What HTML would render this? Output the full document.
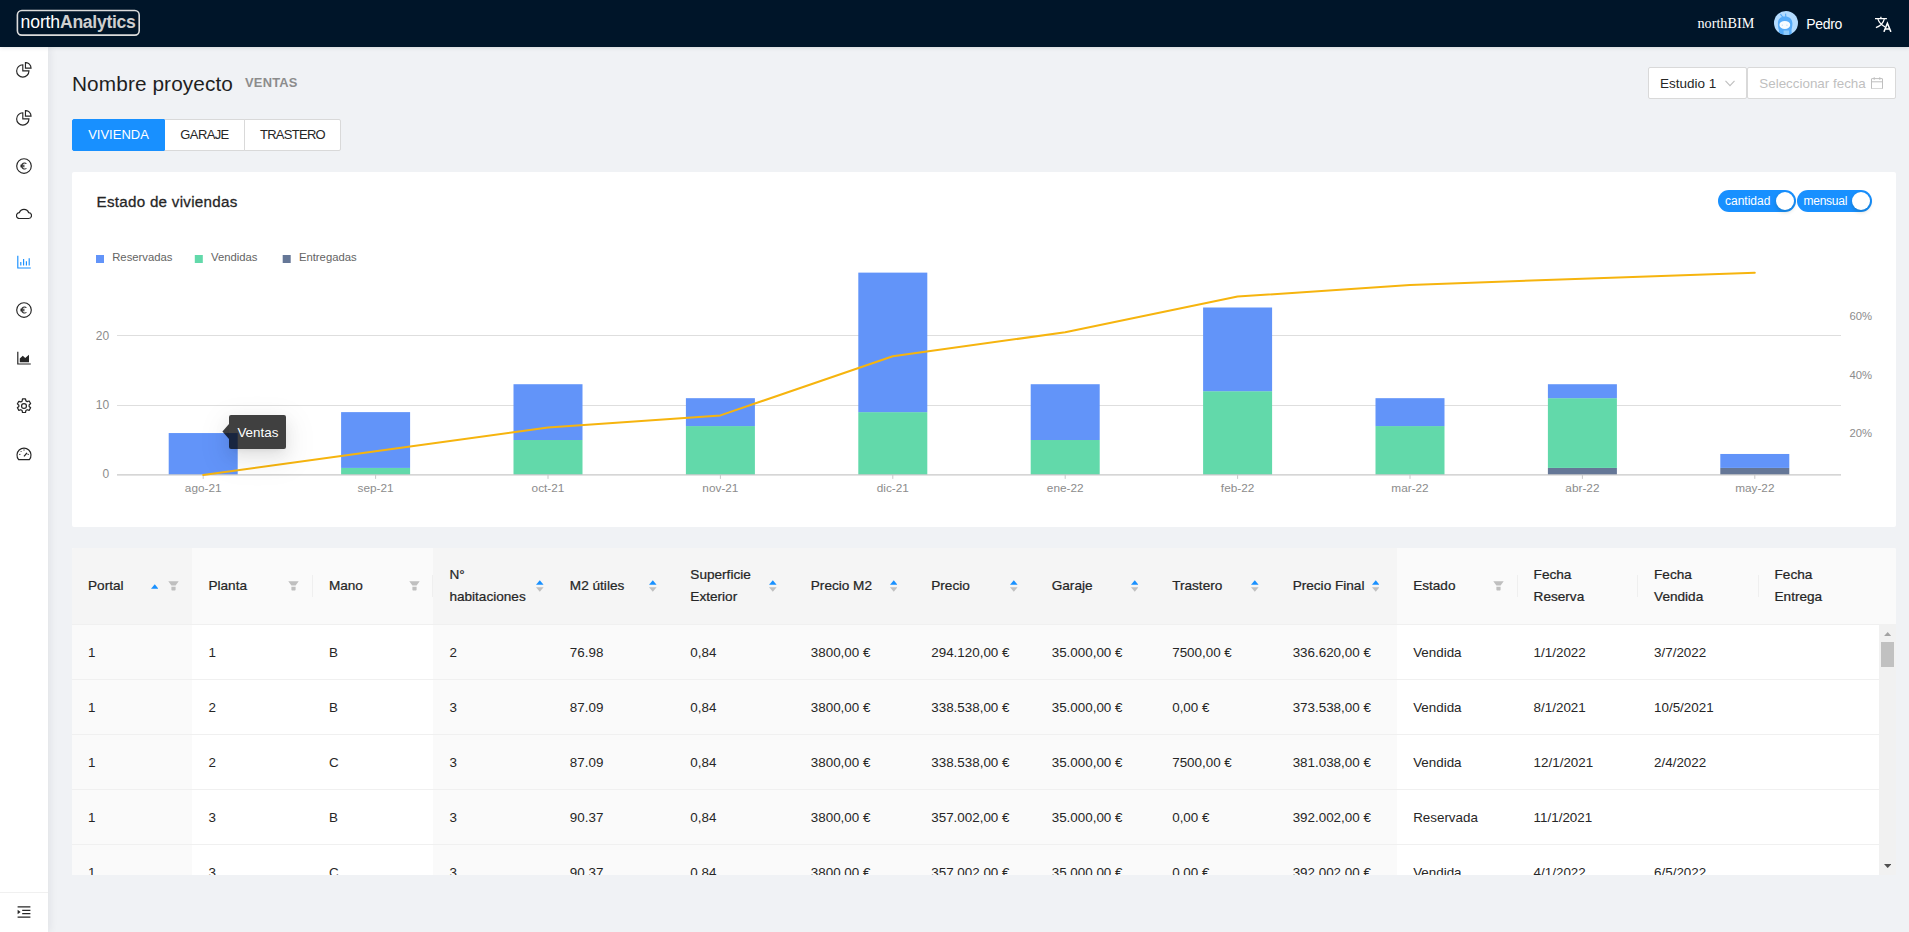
<!DOCTYPE html>
<html lang="es"><head><meta charset="utf-8"><title>northAnalytics</title>
<style>
*{box-sizing:border-box;margin:0;padding:0}
html,body{width:1909px;height:932px;overflow:hidden}
body{position:relative;background:#f0f2f5;font-family:"Liberation Sans",sans-serif;font-size:13.4px;color:#262626}
.abs{position:absolute}
#hdr{position:absolute;left:0;top:0;width:1909px;height:47px;background:#001529;box-shadow:0 1px 4px rgba(0,21,41,.12);z-index:5}
#logo{position:absolute;left:16px;top:9px;width:125px;height:28px;color:#fff;font-size:17.6px;line-height:27.2px;padding-left:4.6px;white-space:nowrap;letter-spacing:-.14px}
#logo svg{position:absolute;left:0;top:0}
#logo b{color:#cfcfcf;font-weight:bold;letter-spacing:-.3px}
#nb{position:absolute;left:1697.5px;top:14px;font-family:"Liberation Serif",serif;font-size:14.2px;line-height:18px;color:#fff}
#av{position:absolute;left:1774px;top:11px;width:24px;height:24px;border-radius:12px;overflow:hidden}
#un{position:absolute;left:1806.3px;top:14.6px;font-size:14px;line-height:18px;color:#fff;letter-spacing:-.32px}
#tr{position:absolute;left:1875px;top:16px;width:17px;height:16px;overflow:visible}
#side{position:absolute;left:0;top:47px;width:48px;height:885px;background:#fff;box-shadow:2px 0 8px 0 rgba(29,35,41,.07);z-index:4}
.sic{position:absolute;left:16px;width:16px;height:16px}
.sic svg,#tr svg,#av svg{display:block}
#sline{position:absolute;left:0;top:892px;width:48px;height:1px;background:#f0f0f0;z-index:6}
#smenu{position:absolute;left:16px;top:904px;width:16px;height:16px;z-index:6}
#ttl{position:absolute;left:72px;top:70px;font-size:20.8px;line-height:28px;color:#1f1f1f;white-space:nowrap;letter-spacing:.1px}
#sub{position:absolute;left:245px;top:74.3px;font-size:12.9px;font-weight:bold;line-height:18px;color:#8c8c8c;white-space:nowrap;letter-spacing:.22px}
.rb{position:absolute;top:119px;height:32px;line-height:30px;text-align:center;font-size:13px;border:1px solid #d9d9d9;background:#fff;color:#262626;letter-spacing:-.2px}
.rb.on{background:#1890ff;border-color:#1890ff;color:#fff}
#sel{position:absolute;left:1648px;top:67px;width:99px;height:32px;background:#fff;border:1px solid #d9d9d9;border-radius:2px}
#sel span{position:absolute;left:11px;top:.7px;line-height:30px;font-size:13.5px;color:#262626}
#sel svg{position:absolute;left:75px;top:9px}
#dp{position:absolute;left:1747px;top:67px;width:149px;height:32px;background:#fff;border:1px solid #d9d9d9;border-radius:2px}
#dp span{position:absolute;left:11.3px;top:.7px;line-height:30px;font-size:13.4px;color:#bfbfbf;white-space:nowrap}
#dp svg{position:absolute;left:123px;top:8.7px}
#card1{position:absolute;left:72px;top:172px;width:1824px;height:355px;background:#fff;border-radius:2px}
#ct{position:absolute;left:96.5px;top:190.3px;font-size:15.2px;line-height:24px;color:#262626;-webkit-text-stroke:.28px #262626;white-space:nowrap;letter-spacing:.27px}
.sw{position:absolute;top:190px;height:22px;border-radius:11px;background:#1890ff;color:#fff;font-size:12px;line-height:23.2px;padding-left:7px;white-space:nowrap}
.sw i{position:absolute;right:2px;top:2px;width:18px;height:18px;border-radius:9px;background:#fff;box-shadow:0 2px 4px rgba(0,35,11,.2)}
#chart{position:absolute;left:0;top:0;width:1909px;height:932px;z-index:2;pointer-events:none}
#tip{position:absolute;left:229px;top:415px;width:57px;height:34px;background:rgba(0,0,0,.75);border-radius:2px;color:#fff;font-size:13.4px;line-height:36px;padding-left:8.4px;z-index:3;box-shadow:0 3px 6px -4px rgba(0,0,0,.12),0 6px 16px 0 rgba(0,0,0,.08),0 9px 28px 8px rgba(0,0,0,.05)}
#tip:before{content:"";position:absolute;left:-6.6px;top:9px;width:6.6px;height:15px;background:rgba(0,0,0,.75);clip-path:polygon(100% 0,0 50%,100% 100%)}
#tbl{position:absolute;left:72px;top:548px;width:1824px;height:327px;background:#fff;overflow:hidden;border-radius:2px 2px 0 0}
#thead{position:absolute;left:0;top:0;width:1824px;height:77px;background:#fafafa;border-bottom:1px solid #f0f0f0}
.th{position:absolute;top:0;height:76px;background:#fafafa;color:#262626;font-size:13.6px;-webkit-text-stroke:.24px #262626}
.th.srt{background:#f5f5f5}
.tt{position:absolute;left:16px;top:27.4px;line-height:22px;white-space:nowrap}
.tt.two{top:16.4px}
.sep{position:absolute;right:0;top:27px;width:1px;height:22px;background:#efefef}
.sorter{position:absolute;top:32px;width:8px;height:12px}
.sorter svg{display:block;margin-bottom:2px}
.sorter.one{top:36px}
.filter{position:absolute;top:32.5px;width:11px;height:11px}
.filter svg{display:block}
#tbody{position:absolute;left:0;top:77px;width:1807px;height:250px;overflow:hidden}
.tr{position:absolute;left:0;width:1807px;height:55px;border-bottom:1px solid #f0f0f0}
.td{position:absolute;top:0;height:54px;padding-left:16px;line-height:55.2px;background:#fff;white-space:nowrap;color:#262626}
.td.srt{background:#fafafa}
#sb{position:absolute;left:1807px;top:76px;width:17px;height:251px;background:#f1f1f1}
#sb i{position:absolute;left:2px;top:18px;width:13px;height:25px;background:#c1c1c1}
#sb svg{position:absolute;left:4.8px}
</style></head><body>
<div id="hdr">
  <div id="logo"><svg width="125" height="28" viewBox="0 0 125 28"><rect x="1.4" y="1.5" width="121.8" height="24.6" rx="4.4" fill="none" stroke="#dcdcdc" stroke-width="1.6"/></svg>north<b>Analytics</b></div>
  <div id="nb">northBIM</div>
  <div id="av"><svg viewBox="0 0 24 24" width="24" height="24"><g><rect width="24" height="24" fill="#b2dbff"/>
<path d="M6.4 3.2 L9.2 6.6 M11.6 2.6 L11.8 6" stroke="#55abf9" stroke-width="1.1" fill="none"/>
<path d="M3.9 12.5 C3.9 7.6 7 5.4 11 5.4 C15.2 5.4 18.4 7.8 18.4 12.5 C18.4 15 17.9 17 17.5 19 L17.8 24.5 H4.6 L5 19.5 C4.3 17.5 3.9 15 3.9 12.5z" fill="#55abf9"/>
<ellipse cx="10.8" cy="13.9" rx="5.4" ry="4" fill="#f6fbff"/>
<circle cx="8.3" cy="14.2" r=".65" fill="#b9dcfb"/><circle cx="12.9" cy="14.2" r=".65" fill="#b9dcfb"/>
<path d="M9.6 19.4 h5.4 v5 h-5.4z" fill="#8ecbfc"/></g></svg></div>
  <div id="un">Pedro</div>
  <div id="tr"><svg viewBox="0 0 17 16" width="17" height="16" fill="none" stroke="#fff" stroke-width="1.15"><path d="M-0.2 2.7h12.1M5.9 0.7v2" stroke-width="1.3"/><path d="M9.3 3C8.4 6.8 5.4 10 0.9 11.6M2.9 3c.9 2.8 3.4 5.8 7.2 7.9"/><path d="M8.9 15.9l3.5-8.6 3.5 8.6M10 13h4.8" stroke-width="1.5"/></svg></div>
</div>
<div id="side">
<div class="sic" style="top:15px"><svg viewBox="0 0 16 16" width="16" height="16" fill="none" stroke="#262626" stroke-width="1.15"><path d="M6.8 2.75A6.15 6.15 0 1 0 12.95 8.9H6.8z"/><path d="M9.45 0.55V6.15H15.05A5.6 5.6 0 0 0 9.45 0.55z"/></svg></div>
<div class="sic" style="top:63px"><svg viewBox="0 0 16 16" width="16" height="16" fill="none" stroke="#262626" stroke-width="1.15"><path d="M6.8 2.75A6.15 6.15 0 1 0 12.95 8.9H6.8z"/><path d="M9.45 0.55V6.15H15.05A5.6 5.6 0 0 0 9.45 0.55z"/></svg></div>
<div class="sic" style="top:111px"><svg viewBox="0 0 16 16" width="16" height="16" fill="none" stroke="#262626" stroke-width="1.15"><circle cx="8" cy="8" r="7.3"/><path d="M10.4 5.6A3 3 0 0 0 5.6 8a3 3 0 0 0 4.8 2.4M4.3 7.2h4.2M4.3 8.8h4.2" stroke-width="1.1"/></svg></div>
<div class="sic" style="top:159px"><svg viewBox="0 0 16 16" width="16" height="16" fill="none" stroke="#262626" stroke-width="1.2"><path d="M3.5 12.5A2.9 2.9 0 0 1 3.3 6.7A5 5 0 0 1 12.7 6.7A2.9 2.9 0 0 1 12.5 12.5z"/></svg></div>
<div class="sic" style="top:207px"><svg viewBox="0 0 16 16" width="16" height="16" fill="none" stroke="#1890ff" stroke-width="1.15"><path d="M1.8 1.8v12.2h13M4.8 8v3.6M7.6 5v6.6M10.4 7.2v4.4M13.2 4.2v7.4"/></svg></div>
<div class="sic" style="top:255px"><svg viewBox="0 0 16 16" width="16" height="16" fill="none" stroke="#262626" stroke-width="1.15"><circle cx="8" cy="8" r="7.3"/><path d="M10.4 5.6A3 3 0 0 0 5.6 8a3 3 0 0 0 4.8 2.4M4.3 7.2h4.2M4.3 8.8h4.2" stroke-width="1.1"/></svg></div>
<div class="sic" style="top:303px"><svg viewBox="0 0 16 16" width="16" height="16"><path d="M1.8 1.8v12.2h13" fill="none" stroke="#262626" stroke-width="1.2"/><path d="M3.8 12.2V8.4l3-2.6 2.4 2.2 3.8-3.2v7.4z" fill="#262626"/></svg></div>
<div class="sic" style="top:351px"><svg viewBox="0.5 0.5 15 15" width="16" height="16" fill="none" stroke="#262626" stroke-width="1.15"><circle cx="8" cy="8" r="2.3"/><path d="M6.6 1.3h2.8l.4 1.9 1.2.7 1.8-.6 1.4 2.4-1.4 1.3v1.4l1.4 1.3-1.4 2.4-1.8-.6-1.2.7-.4 1.9H6.6l-.4-1.9-1.2-.7-1.8.6-1.4-2.4 1.4-1.3V7.3L1.8 6l1.4-2.4 1.8.6 1.2-.7z" stroke-linejoin="round"/></svg></div>
<div class="sic" style="top:399px"><svg viewBox="0 0 16 16" width="16" height="16" fill="none" stroke="#262626" stroke-width="1.15"><path d="M2.6 13.6A7 7 0 1 1 13.4 13.6z" stroke-linejoin="round"/><path d="M8 10.4l3-3.6" stroke-width="1.3"/><path d="M8 3.4v1.2M3.2 8.4h1.2M11.6 8.4h1.2M4.6 5l.8.8" stroke-width="1"/></svg></div>
</div>
<div id="sline"></div>
<div id="smenu"><svg viewBox="0 0 16 16" width="16" height="16" fill="none" stroke="#262626" stroke-width="1.2"><path d="M1.6 2.8h12.8M6.2 6.3h8.2M6.2 9.7h8.2M1.6 13.2h12.8"/><path d="M1.6 5.8L4.6 8l-3 2.2z" fill="#262626" stroke="none"/></svg></div>

<div id="ttl">Nombre proyecto</div>
<div id="sub">VENTAS</div>
<div class="rb on" style="left:72px;width:93px;border-radius:2px 0 0 2px;letter-spacing:0">VIVIENDA</div>
<div class="rb" style="left:164px;width:81px;border-left-color:#1890ff;letter-spacing:-.62px">GARAJE</div>
<div class="rb" style="left:244px;width:97px;border-radius:0 2px 2px 0;letter-spacing:-.72px">TRASTERO</div>
<div id="sel"><span>Estudio 1</span><svg viewBox="0 0 12 12" width="12" height="12" fill="none" stroke="#bfbfbf" stroke-width="1.1"><path d="M1.5 3.8L6 8.6l4.5-4.8"/></svg></div>
<div id="dp"><span>Seleccionar fecha</span><svg viewBox="0 0 12 12.5" width="12" height="12.5" fill="none" stroke="#bfbfbf" stroke-width="1"><rect x="0.5" y="1.6" width="11" height="10.3" rx="0.3"/><path d="M0.5 4.8h11M3.2 0.2v2.6M8.8 0.2v2.6"/></svg></div>

<div id="card1"></div>
<div id="ct">Estado de viviendas</div>
<div class="sw" style="left:1718px;width:77.5px">cantidad<i></i></div>
<div class="sw" style="left:1796.5px;width:75.5px;letter-spacing:-.25px">mensual<i></i></div>
<svg id="chart" viewBox="0 0 1909 932" width="1909" height="932">
<line x1="117.0" x2="1841" y1="405.50" y2="405.50" stroke="#dedede" stroke-width="1"/>
<line x1="117.0" x2="1841" y1="335.50" y2="335.50" stroke="#dedede" stroke-width="1"/>
<rect x="168.70" y="433.05" width="69.0" height="41.85" fill="#6294f9"/>
<rect x="341.10" y="467.92" width="69.0" height="6.97" fill="#62d9aa"/>
<rect x="341.10" y="412.12" width="69.0" height="55.80" fill="#6294f9"/>
<rect x="513.50" y="440.02" width="69.0" height="34.88" fill="#62d9aa"/>
<rect x="513.50" y="384.22" width="69.0" height="55.80" fill="#6294f9"/>
<rect x="685.90" y="426.07" width="69.0" height="48.82" fill="#62d9aa"/>
<rect x="685.90" y="398.18" width="69.0" height="27.90" fill="#6294f9"/>
<rect x="858.30" y="412.12" width="69.0" height="62.77" fill="#62d9aa"/>
<rect x="858.30" y="272.62" width="69.0" height="139.50" fill="#6294f9"/>
<rect x="1030.70" y="440.02" width="69.0" height="34.88" fill="#62d9aa"/>
<rect x="1030.70" y="384.22" width="69.0" height="55.80" fill="#6294f9"/>
<rect x="1203.10" y="391.20" width="69.0" height="83.70" fill="#62d9aa"/>
<rect x="1203.10" y="307.50" width="69.0" height="83.70" fill="#6294f9"/>
<rect x="1375.50" y="426.07" width="69.0" height="48.82" fill="#62d9aa"/>
<rect x="1375.50" y="398.18" width="69.0" height="27.90" fill="#6294f9"/>
<rect x="1547.90" y="467.92" width="69.0" height="6.97" fill="#657797"/>
<rect x="1547.90" y="398.17" width="69.0" height="69.75" fill="#62d9aa"/>
<rect x="1547.90" y="384.22" width="69.0" height="13.95" fill="#6294f9"/>
<rect x="1720.30" y="467.92" width="69.0" height="6.97" fill="#657797"/>
<rect x="1720.30" y="453.97" width="69.0" height="13.95" fill="#6294f9"/>
<line x1="117.0" x2="1841" y1="474.9" y2="474.9" stroke="#c8c8c8" stroke-width="1.4"/>
<line x1="203.20" x2="203.20" y1="474.9" y2="478.9" stroke="#c8c8c8" stroke-width="1"/>
<line x1="375.60" x2="375.60" y1="474.9" y2="478.9" stroke="#c8c8c8" stroke-width="1"/>
<line x1="548.00" x2="548.00" y1="474.9" y2="478.9" stroke="#c8c8c8" stroke-width="1"/>
<line x1="720.40" x2="720.40" y1="474.9" y2="478.9" stroke="#c8c8c8" stroke-width="1"/>
<line x1="892.80" x2="892.80" y1="474.9" y2="478.9" stroke="#c8c8c8" stroke-width="1"/>
<line x1="1065.20" x2="1065.20" y1="474.9" y2="478.9" stroke="#c8c8c8" stroke-width="1"/>
<line x1="1237.60" x2="1237.60" y1="474.9" y2="478.9" stroke="#c8c8c8" stroke-width="1"/>
<line x1="1410.00" x2="1410.00" y1="474.9" y2="478.9" stroke="#c8c8c8" stroke-width="1"/>
<line x1="1582.40" x2="1582.40" y1="474.9" y2="478.9" stroke="#c8c8c8" stroke-width="1"/>
<line x1="1754.80" x2="1754.80" y1="474.9" y2="478.9" stroke="#c8c8c8" stroke-width="1"/>
<polyline points="203.20,474.90 375.60,451.30 548.00,427.60 720.40,415.40 892.80,356.20 1065.20,332.30 1237.60,296.60 1410.00,284.90 1582.40,278.80 1754.80,272.70" fill="none" stroke="#f6b40e" stroke-width="2" stroke-linejoin="round" stroke-linecap="round"/>
<text x="203.20" y="492.3" text-anchor="middle" font-family="Liberation Sans, sans-serif" font-size="11.8" fill="#8c8c8c">ago-21</text>
<text x="375.60" y="492.3" text-anchor="middle" font-family="Liberation Sans, sans-serif" font-size="11.8" fill="#8c8c8c">sep-21</text>
<text x="548.00" y="492.3" text-anchor="middle" font-family="Liberation Sans, sans-serif" font-size="11.8" fill="#8c8c8c">oct-21</text>
<text x="720.40" y="492.3" text-anchor="middle" font-family="Liberation Sans, sans-serif" font-size="11.8" fill="#8c8c8c">nov-21</text>
<text x="892.80" y="492.3" text-anchor="middle" font-family="Liberation Sans, sans-serif" font-size="11.8" fill="#8c8c8c">dic-21</text>
<text x="1065.20" y="492.3" text-anchor="middle" font-family="Liberation Sans, sans-serif" font-size="11.8" fill="#8c8c8c">ene-22</text>
<text x="1237.60" y="492.3" text-anchor="middle" font-family="Liberation Sans, sans-serif" font-size="11.8" fill="#8c8c8c">feb-22</text>
<text x="1410.00" y="492.3" text-anchor="middle" font-family="Liberation Sans, sans-serif" font-size="11.8" fill="#8c8c8c">mar-22</text>
<text x="1582.40" y="492.3" text-anchor="middle" font-family="Liberation Sans, sans-serif" font-size="11.8" fill="#8c8c8c">abr-22</text>
<text x="1754.80" y="492.3" text-anchor="middle" font-family="Liberation Sans, sans-serif" font-size="11.8" fill="#8c8c8c">may-22</text>
<text x="109.2" y="478.30" text-anchor="end" font-family="Liberation Sans, sans-serif" font-size="12" fill="#8c8c8c">0</text>
<text x="109.2" y="409.45" text-anchor="end" font-family="Liberation Sans, sans-serif" font-size="12" fill="#8c8c8c">10</text>
<text x="109.2" y="339.70" text-anchor="end" font-family="Liberation Sans, sans-serif" font-size="12" fill="#8c8c8c">20</text>
<text x="1849.5" y="319.50" text-anchor="start" font-family="Liberation Sans, sans-serif" font-size="11.3" fill="#8c8c8c">60%</text>
<text x="1849.5" y="379.20" text-anchor="start" font-family="Liberation Sans, sans-serif" font-size="11.3" fill="#8c8c8c">40%</text>
<text x="1849.5" y="436.90" text-anchor="start" font-family="Liberation Sans, sans-serif" font-size="11.3" fill="#8c8c8c">20%</text>
<rect x="96" y="255" width="8" height="8" fill="#6294f9"/>
<text x="112.2" y="261.2" font-family="Liberation Sans, sans-serif" font-size="11.3" fill="#636363">Reservadas</text>
<rect x="194.8" y="255" width="8" height="8" fill="#62d9aa"/>
<text x="211.0" y="261.2" font-family="Liberation Sans, sans-serif" font-size="11.3" fill="#636363">Vendidas</text>
<rect x="282.7" y="255" width="8" height="8" fill="#657797"/>
<text x="298.9" y="261.2" font-family="Liberation Sans, sans-serif" font-size="11.3" fill="#636363">Entregadas</text>
</svg>
<div id="tip">Ventas</div>

<div id="tbl">
  <div id="thead">
<div class="th srt" style="left:0.00px;width:120.47px"><div class="tt">Portal</div><span class="sorter one" style="left:78.5px"><svg viewBox="0 0 8 5" width="7.6" height="5"><path d="M4 0L8 5H0z" fill="#1890ff"/></svg></span><span class="filter" style="left:96px"><svg class="flt" viewBox="0 0 11 11" width="11" height="11"><path d="M0.3 0.2h10.4L7.6 4.6H3.4zM3.4 5.7h4.2v3c0 .5-.3.8-.8.8H4.2c-.5 0-.8-.3-.8-.8z" fill="#bfbfbf"/></svg></span></div>
<div class="th" style="left:120.47px;width:120.47px"><div class="tt">Planta</div><span class="filter" style="left:96px"><svg class="flt" viewBox="0 0 11 11" width="11" height="11"><path d="M0.3 0.2h10.4L7.6 4.6H3.4zM3.4 5.7h4.2v3c0 .5-.3.8-.8.8H4.2c-.5 0-.8-.3-.8-.8z" fill="#bfbfbf"/></svg></span><span class="sep"></span></div>
<div class="th" style="left:240.93px;width:120.47px"><div class="tt">Mano</div><span class="filter" style="left:96px"><svg class="flt" viewBox="0 0 11 11" width="11" height="11"><path d="M0.3 0.2h10.4L7.6 4.6H3.4zM3.4 5.7h4.2v3c0 .5-.3.8-.8.8H4.2c-.5 0-.8-.3-.8-.8z" fill="#bfbfbf"/></svg></span><span class="sep"></span></div>
<div class="th srt" style="left:361.40px;width:120.47px"><div class="tt two">N&deg;<br>habitaciones</div><span class="sorter" style="left:102.9px"><svg viewBox="0 0 8 5" width="7.6" height="5"><path d="M4 0L8 5H0z" fill="#1890ff"/></svg><svg viewBox="0 0 8 5" width="7.6" height="5"><path d="M4 5L8 0H0z" fill="#bfbfbf"/></svg></span></div>
<div class="th srt" style="left:481.87px;width:120.47px"><div class="tt">M2 &uacute;tiles</div><span class="sorter" style="left:95.1px"><svg viewBox="0 0 8 5" width="7.6" height="5"><path d="M4 0L8 5H0z" fill="#1890ff"/></svg><svg viewBox="0 0 8 5" width="7.6" height="5"><path d="M4 5L8 0H0z" fill="#bfbfbf"/></svg></span></div>
<div class="th srt" style="left:602.33px;width:120.47px"><div class="tt two">Superficie<br>Exterior</div><span class="sorter" style="left:95.1px"><svg viewBox="0 0 8 5" width="7.6" height="5"><path d="M4 0L8 5H0z" fill="#1890ff"/></svg><svg viewBox="0 0 8 5" width="7.6" height="5"><path d="M4 5L8 0H0z" fill="#bfbfbf"/></svg></span></div>
<div class="th srt" style="left:722.80px;width:120.47px"><div class="tt">Precio M2</div><span class="sorter" style="left:95.1px"><svg viewBox="0 0 8 5" width="7.6" height="5"><path d="M4 0L8 5H0z" fill="#1890ff"/></svg><svg viewBox="0 0 8 5" width="7.6" height="5"><path d="M4 5L8 0H0z" fill="#bfbfbf"/></svg></span></div>
<div class="th srt" style="left:843.27px;width:120.47px"><div class="tt">Precio</div><span class="sorter" style="left:95.1px"><svg viewBox="0 0 8 5" width="7.6" height="5"><path d="M4 0L8 5H0z" fill="#1890ff"/></svg><svg viewBox="0 0 8 5" width="7.6" height="5"><path d="M4 5L8 0H0z" fill="#bfbfbf"/></svg></span></div>
<div class="th srt" style="left:963.73px;width:120.47px"><div class="tt">Garaje</div><span class="sorter" style="left:95.1px"><svg viewBox="0 0 8 5" width="7.6" height="5"><path d="M4 0L8 5H0z" fill="#1890ff"/></svg><svg viewBox="0 0 8 5" width="7.6" height="5"><path d="M4 5L8 0H0z" fill="#bfbfbf"/></svg></span></div>
<div class="th srt" style="left:1084.20px;width:120.47px"><div class="tt">Trastero</div><span class="sorter" style="left:95.1px"><svg viewBox="0 0 8 5" width="7.6" height="5"><path d="M4 0L8 5H0z" fill="#1890ff"/></svg><svg viewBox="0 0 8 5" width="7.6" height="5"><path d="M4 5L8 0H0z" fill="#bfbfbf"/></svg></span></div>
<div class="th srt" style="left:1204.67px;width:120.47px"><div class="tt">Precio Final</div><span class="sorter" style="left:95.1px"><svg viewBox="0 0 8 5" width="7.6" height="5"><path d="M4 0L8 5H0z" fill="#1890ff"/></svg><svg viewBox="0 0 8 5" width="7.6" height="5"><path d="M4 5L8 0H0z" fill="#bfbfbf"/></svg></span></div>
<div class="th" style="left:1325.13px;width:120.47px"><div class="tt">Estado</div><span class="filter" style="left:96px"><svg class="flt" viewBox="0 0 11 11" width="11" height="11"><path d="M0.3 0.2h10.4L7.6 4.6H3.4zM3.4 5.7h4.2v3c0 .5-.3.8-.8.8H4.2c-.5 0-.8-.3-.8-.8z" fill="#bfbfbf"/></svg></span><span class="sep"></span></div>
<div class="th" style="left:1445.60px;width:120.47px"><div class="tt two">Fecha<br>Reserva</div><span class="sep"></span></div>
<div class="th" style="left:1566.07px;width:120.47px"><div class="tt two">Fecha<br>Vendida</div><span class="sep"></span></div>
<div class="th" style="left:1686.53px;width:120.47px"><div class="tt two">Fecha<br>Entrega</div></div>
  </div>
  <div id="tbody">
<div class="tr" style="top:0px"><div class="td srt" style="left:0.00px;width:120.47px">1</div><div class="td" style="left:120.47px;width:120.47px">1</div><div class="td" style="left:240.93px;width:120.47px">B</div><div class="td srt" style="left:361.40px;width:120.47px">2</div><div class="td srt" style="left:481.87px;width:120.47px">76.98</div><div class="td srt" style="left:602.33px;width:120.47px">0,84</div><div class="td srt" style="left:722.80px;width:120.47px">3800,00 €</div><div class="td srt" style="left:843.27px;width:120.47px">294.120,00 €</div><div class="td srt" style="left:963.73px;width:120.47px">35.000,00 €</div><div class="td srt" style="left:1084.20px;width:120.47px">7500,00 €</div><div class="td srt" style="left:1204.67px;width:120.47px">336.620,00 €</div><div class="td" style="left:1325.13px;width:120.47px">Vendida</div><div class="td" style="left:1445.60px;width:120.47px">1/1/2022</div><div class="td" style="left:1566.07px;width:120.47px">3/7/2022</div><div class="td" style="left:1686.53px;width:120.47px"></div></div>
<div class="tr" style="top:55px"><div class="td srt" style="left:0.00px;width:120.47px">1</div><div class="td" style="left:120.47px;width:120.47px">2</div><div class="td" style="left:240.93px;width:120.47px">B</div><div class="td srt" style="left:361.40px;width:120.47px">3</div><div class="td srt" style="left:481.87px;width:120.47px">87.09</div><div class="td srt" style="left:602.33px;width:120.47px">0,84</div><div class="td srt" style="left:722.80px;width:120.47px">3800,00 €</div><div class="td srt" style="left:843.27px;width:120.47px">338.538,00 €</div><div class="td srt" style="left:963.73px;width:120.47px">35.000,00 €</div><div class="td srt" style="left:1084.20px;width:120.47px">0,00 €</div><div class="td srt" style="left:1204.67px;width:120.47px">373.538,00 €</div><div class="td" style="left:1325.13px;width:120.47px">Vendida</div><div class="td" style="left:1445.60px;width:120.47px">8/1/2021</div><div class="td" style="left:1566.07px;width:120.47px">10/5/2021</div><div class="td" style="left:1686.53px;width:120.47px"></div></div>
<div class="tr" style="top:110px"><div class="td srt" style="left:0.00px;width:120.47px">1</div><div class="td" style="left:120.47px;width:120.47px">2</div><div class="td" style="left:240.93px;width:120.47px">C</div><div class="td srt" style="left:361.40px;width:120.47px">3</div><div class="td srt" style="left:481.87px;width:120.47px">87.09</div><div class="td srt" style="left:602.33px;width:120.47px">0,84</div><div class="td srt" style="left:722.80px;width:120.47px">3800,00 €</div><div class="td srt" style="left:843.27px;width:120.47px">338.538,00 €</div><div class="td srt" style="left:963.73px;width:120.47px">35.000,00 €</div><div class="td srt" style="left:1084.20px;width:120.47px">7500,00 €</div><div class="td srt" style="left:1204.67px;width:120.47px">381.038,00 €</div><div class="td" style="left:1325.13px;width:120.47px">Vendida</div><div class="td" style="left:1445.60px;width:120.47px">12/1/2021</div><div class="td" style="left:1566.07px;width:120.47px">2/4/2022</div><div class="td" style="left:1686.53px;width:120.47px"></div></div>
<div class="tr" style="top:165px"><div class="td srt" style="left:0.00px;width:120.47px">1</div><div class="td" style="left:120.47px;width:120.47px">3</div><div class="td" style="left:240.93px;width:120.47px">B</div><div class="td srt" style="left:361.40px;width:120.47px">3</div><div class="td srt" style="left:481.87px;width:120.47px">90.37</div><div class="td srt" style="left:602.33px;width:120.47px">0,84</div><div class="td srt" style="left:722.80px;width:120.47px">3800,00 €</div><div class="td srt" style="left:843.27px;width:120.47px">357.002,00 €</div><div class="td srt" style="left:963.73px;width:120.47px">35.000,00 €</div><div class="td srt" style="left:1084.20px;width:120.47px">0,00 €</div><div class="td srt" style="left:1204.67px;width:120.47px">392.002,00 €</div><div class="td" style="left:1325.13px;width:120.47px">Reservada</div><div class="td" style="left:1445.60px;width:120.47px">11/1/2021</div><div class="td" style="left:1566.07px;width:120.47px"></div><div class="td" style="left:1686.53px;width:120.47px"></div></div>
<div class="tr" style="top:220px"><div class="td srt" style="left:0.00px;width:120.47px">1</div><div class="td" style="left:120.47px;width:120.47px">3</div><div class="td" style="left:240.93px;width:120.47px">C</div><div class="td srt" style="left:361.40px;width:120.47px">3</div><div class="td srt" style="left:481.87px;width:120.47px">90.37</div><div class="td srt" style="left:602.33px;width:120.47px">0,84</div><div class="td srt" style="left:722.80px;width:120.47px">3800,00 €</div><div class="td srt" style="left:843.27px;width:120.47px">357.002,00 €</div><div class="td srt" style="left:963.73px;width:120.47px">35.000,00 €</div><div class="td srt" style="left:1084.20px;width:120.47px">0,00 €</div><div class="td srt" style="left:1204.67px;width:120.47px">392.002,00 €</div><div class="td" style="left:1325.13px;width:120.47px">Vendida</div><div class="td" style="left:1445.60px;width:120.47px">4/1/2022</div><div class="td" style="left:1566.07px;width:120.47px">6/5/2022</div><div class="td" style="left:1686.53px;width:120.47px"></div></div>
  </div>
  <div id="sb"><svg style="top:7.9px" viewBox="0 0 9 5" width="7.4" height="4.1"><path d="M4.5 0L9 5H0z" fill="#a3a3a3"/></svg><i></i><svg style="top:239.8px" viewBox="0 0 9 5" width="7.4" height="4.1"><path d="M4.5 5L9 0H0z" fill="#505050"/></svg></div>
</div>
</body></html>
